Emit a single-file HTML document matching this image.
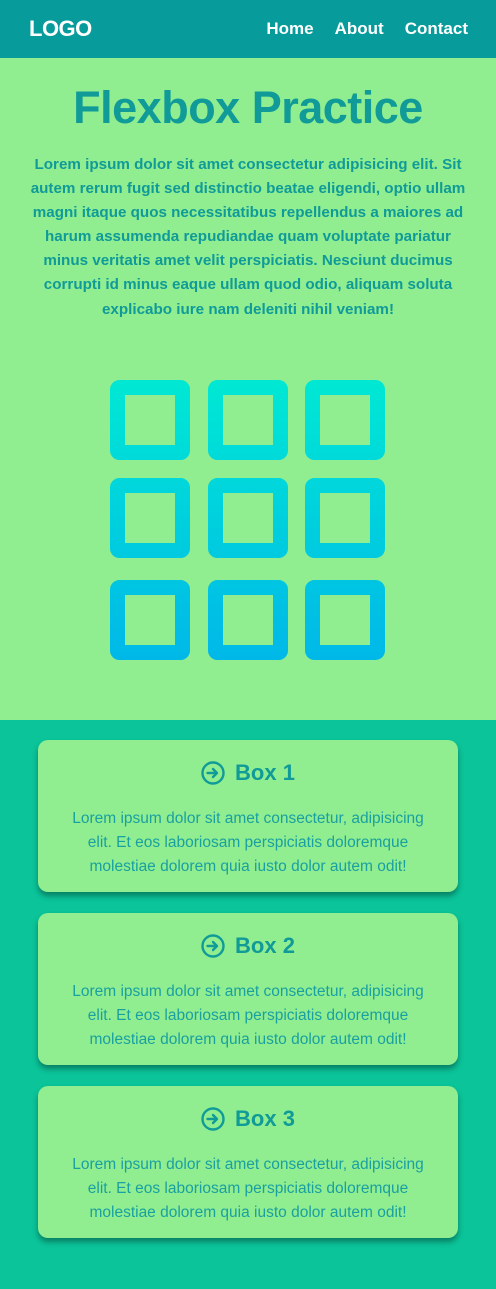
<!DOCTYPE html>
<html><head><meta charset="utf-8"><style>
*{margin:0;padding:0;box-sizing:border-box}
body{width:496px;height:1289px;background:#90ee90;font-family:"Liberation Sans",sans-serif;color:#109a98;overflow:hidden}
.nav{height:58px;background:#089b9b;display:flex;align-items:center;justify-content:space-between;padding:0 28px 0 29px;color:#fff;font-weight:bold}
.logo{font-size:22px;letter-spacing:-0.5px}
.links{display:flex;gap:21px;font-size:17px}
h1{text-align:center;font-size:45px;margin-top:24px;letter-spacing:-0.5px;line-height:52px}
.intro{text-align:center;font-weight:bold;font-size:15.2px;line-height:24.1px;padding:0 30px;margin-top:19px}
svg.grid{position:absolute;left:0;top:370px}
.bottom{position:absolute;top:720px;left:0;width:496px;height:569px;background:#0bc49a;padding-top:20px}
.card{width:420px;height:152px;margin:0 auto 21px;background:#90ee90;border-radius:10px;box-shadow:0 4px 6px rgba(0,0,0,.35);text-align:center;padding-top:20px}
.card h2{font-size:22px;display:flex;align-items:center;justify-content:center;gap:10px;height:26px}
.card p{font-size:15.5px;line-height:24px;margin-top:21px;padding:0 30px;color:#1aa0a0}
</style></head><body>
<div class="nav"><div class="logo">LOGO</div><div class="links"><span>Home</span><span>About</span><span>Contact</span></div></div>
<h1>Flexbox Practice</h1>
<p class="intro">Lorem ipsum dolor sit amet consectetur adipisicing elit. Sit autem rerum fugit sed distinctio beatae eligendi, optio ullam magni itaque quos necessitatibus repellendus a maiores ad harum assumenda repudiandae quam voluptate pariatur minus veritatis amet velit perspiciatis. Nesciunt ducimus corrupti id minus eaque ullam quod odio, aliquam soluta explicabo iure nam deleniti nihil veniam!</p>
<svg class="grid" width="496" height="300" viewBox="0 370 496 300">
<defs><linearGradient id="g" gradientUnits="userSpaceOnUse" x1="0" y1="380" x2="0" y2="660"><stop offset="0" stop-color="#00e8d4"/><stop offset="1" stop-color="#00b8e8"/></linearGradient></defs>
<g fill="none" stroke="url(#g)" stroke-width="15" stroke-linejoin="round">
<rect x="117.5" y="387.5" width="65" height="65" rx="2"/><rect x="215.5" y="387.5" width="65" height="65" rx="2"/><rect x="312.5" y="387.5" width="65" height="65" rx="2"/>
<rect x="117.5" y="485.5" width="65" height="65" rx="2"/><rect x="215.5" y="485.5" width="65" height="65" rx="2"/><rect x="312.5" y="485.5" width="65" height="65" rx="2"/>
<rect x="117.5" y="587.5" width="65" height="65" rx="2"/><rect x="215.5" y="587.5" width="65" height="65" rx="2"/><rect x="312.5" y="587.5" width="65" height="65" rx="2"/>
</g></svg>
<div class="bottom">
<div class="card"><h2><svg width="24" height="24" viewBox="0 0 24 24" fill="none" stroke="#109a98" stroke-width="2.4"><circle cx="12" cy="12" r="10.5"/><path d="M6.5 12h9M12 8l4 4-4 4" stroke-linecap="round" stroke-linejoin="round"/></svg>Box 1</h2><p>Lorem ipsum dolor sit amet consectetur, adipisicing elit. Et eos laboriosam perspiciatis doloremque molestiae dolorem quia iusto dolor autem odit!</p></div>
<div class="card"><h2><svg width="24" height="24" viewBox="0 0 24 24" fill="none" stroke="#109a98" stroke-width="2.4"><circle cx="12" cy="12" r="10.5"/><path d="M6.5 12h9M12 8l4 4-4 4" stroke-linecap="round" stroke-linejoin="round"/></svg>Box 2</h2><p>Lorem ipsum dolor sit amet consectetur, adipisicing elit. Et eos laboriosam perspiciatis doloremque molestiae dolorem quia iusto dolor autem odit!</p></div>
<div class="card"><h2><svg width="24" height="24" viewBox="0 0 24 24" fill="none" stroke="#109a98" stroke-width="2.4"><circle cx="12" cy="12" r="10.5"/><path d="M6.5 12h9M12 8l4 4-4 4" stroke-linecap="round" stroke-linejoin="round"/></svg>Box 3</h2><p>Lorem ipsum dolor sit amet consectetur, adipisicing elit. Et eos laboriosam perspiciatis doloremque molestiae dolorem quia iusto dolor autem odit!</p></div>
</div>
</body></html>
